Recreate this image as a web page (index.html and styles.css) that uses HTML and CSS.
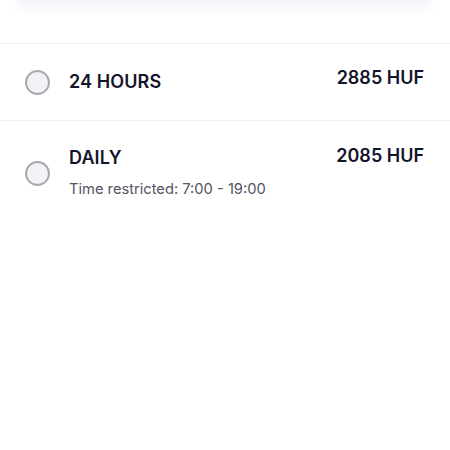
FILE: index.html
```html
<!DOCTYPE html>
<html>
<head>
<meta charset="utf-8">
<link rel="stylesheet" href="styles.css">
</head>
<body>
<div class="top">
  <div class="card"></div>
</div>
<div class="list">
  <div class="row">
    <span class="radio"></span>
    <div class="info">
      <div class="title">24 HOURS</div>
    </div>
    <div class="price">2885 HUF</div>
  </div>
  <div class="row row-sub">
    <span class="radio"></span>
    <div class="info">
      <div class="title">DAILY</div>
      <div class="sub">Time restricted: 7:00 - 19:00</div>
    </div>
    <div class="price">2085 HUF</div>
  </div>
</div>
</body>
</html>
```
FILE: styles.css
```css
html, body {
  margin: 0;
  padding: 0;
  background: #ffffff;
  font-family: "Inter", "Open Sans", sans-serif;
  color: #14142b;
}
.top {
  height: 44px;
  border-bottom: 1px solid #efeff2;
  padding: 0 18px;
  box-sizing: border-box;
}
.card {
  height: 5px;
  background: #f7f4fa;
  border-radius: 0 0 8px 8px;
  box-shadow: 0 3px 8px rgba(200, 190, 220, 0.25);
}
.row {
  display: flex;
  align-items: center;
  padding: 0 26px 0 25px;
  height: 77px;
  border-bottom: 1px solid #efeff2;
  box-sizing: border-box;
}
.row-sub {
  border-bottom: none;
  align-items: flex-start;
  padding-top: 26px;
}
.radio {
  width: 21px;
  height: 21px;
  border-radius: 50%;
  border: 2px solid #a9a9ad;
  background: #f1f1f7;
  flex-shrink: 0;
}
.row-sub .radio {
  margin-top: 14px;
}
.info {
  flex: 1;
  margin-left: 19px;
  display: flex;
  flex-direction: column;
}
.title {
  font-size: 18px;
  font-weight: 600;
  letter-spacing: 0.1px;
  line-height: 22px;
  margin-top: 0;
}
.sub {
  margin-top: 11px;
  font-size: 14.7px;
  color: #545463;
  line-height: 18px;
}
.price {
  font-size: 18px;
  font-weight: 600;
  line-height: 22px;
  margin-top: -8px;
}
.row-sub .price {
  margin-top: -2px;
}
```
